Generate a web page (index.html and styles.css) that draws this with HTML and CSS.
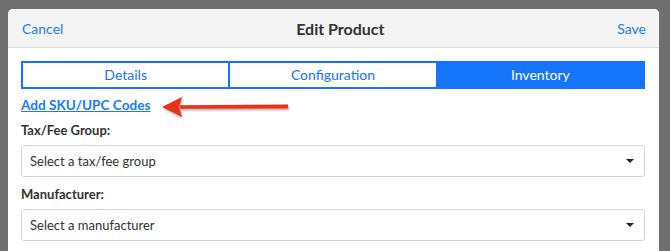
FILE: index.html
```html
<!DOCTYPE html>
<html lang="en">
<head>
    <meta charset="UTF-8">
    <meta name="viewport" content="width=device-width, initial-scale=1.0">
    <title>Edit Product</title>
    <link rel="stylesheet" href="styles.css">
</head>
<body>
    <div class="modal">
        <div class="modal-header">
            <a class="header-link" href="#">Cancel</a>
            <h2>Edit Product</h2>
            <a class="header-link" href="#">Save</a>
        </div>
        <div class="modal-body">
            <div class="tabs">
                <div class="tab">Details</div>
                <div class="tab">Configuration</div>
                <div class="tab active">Inventory</div>
            </div>
            <div class="link-row">
                <a class="add-link" href="#">Add SKU/UPC Codes</a>
                <svg class="arrow" width="140" height="28" viewBox="0 0 140 28">
                    <defs>
                        <filter id="shadow" x="-10%" y="-30%" width="120%" height="160%">
                            <feDropShadow dx="1" dy="1.5" stdDeviation="1" flood-color="#000" flood-opacity="0.35"/>
                        </filter>
                    </defs>
                    <g filter="url(#shadow)">
                        <path d="M20 12.2 L128 11.6 L128 15.4 L20 15.8 Z" fill="#e8301c"/>
                        <path d="M2 14 L22 4 L19 14 L22 24 Z" fill="#e8301c"/>
                    </g>
                </svg>
            </div>
            <div class="form-group">
                <label>Tax/Fee Group:</label>
                <div class="select">
                    <span>Select a tax/fee group</span>
                    <span class="caret"></span>
                </div>
            </div>
            <div class="form-group">
                <label>Manufacturer:</label>
                <div class="select">
                    <span>Select a manufacturer</span>
                    <span class="caret"></span>
                </div>
            </div>
        </div>
    </div>
</body>
</html>
```

FILE: styles.css
```css
html, body {
    height: 100%;
}
body {
    margin: 0;
    padding: 9px 11px 0 8px;
    box-sizing: border-box;
    overflow: hidden;
    font-family: Lato, "Open Sans", sans-serif;
    background-color: #6f6f6f;
}
.modal {
    background-color: #fff;
    border-radius: 5px 5px 0 0;
    height: 300px;
}
.modal-header {
    display: flex;
    justify-content: space-between;
    align-items: center;
    height: 38px;
    padding: 0 13px 0 14px;
    background-color: #f4f4f4;
    border-bottom: 1px solid #dedede;
    border-radius: 5px 5px 0 0;
}
.modal-header h2 {
    margin: 0;
    font-size: 16px;
    font-weight: bold;
    color: #333;
}
.header-link {
    color: #1a7cf5;
    text-decoration: none;
    font-size: 14px;
}
.modal-body {
    padding: 13px 14px 0 13px;
}
.tabs {
    display: flex;
    border: 2px solid #1474fa;
    background-color: #1474fa;
    gap: 2px;
}
.tab {
    flex: 1;
    height: 24px;
    line-height: 24px;
    text-align: center;
    font-size: 14px;
    color: #1474fa;
    background-color: #fff;
}
.tab.active {
    background-color: #1474fa;
    color: #fff;
}
.link-row {
    position: relative;
    height: 29px;
    display: flex;
    align-items: center;
}
.add-link {
    font-size: 13.6px;
    font-weight: bold;
    color: #1a7cf5;
    text-decoration: underline;
    padding-top: 2px;
}
.arrow {
    position: absolute;
    left: 139px;
    top: 4px;
}
.form-group {
    margin-bottom: 9px;
}
label {
    display: block;
    font-size: 13px;
    font-weight: bold;
    color: #333;
    margin: 4px 0 7px;
}
.select {
    display: flex;
    justify-content: space-between;
    align-items: center;
    height: 30px;
    padding: 0 8px;
    border: 1px solid #d6d6d6;
    border-radius: 3px;
    font-size: 13px;
    color: #333;
}
.caret {
    width: 0;
    height: 0;
    border-left: 4px solid transparent;
    border-right: 4px solid transparent;
    border-top: 4px solid #222;
    margin-right: 2px;
}
```
